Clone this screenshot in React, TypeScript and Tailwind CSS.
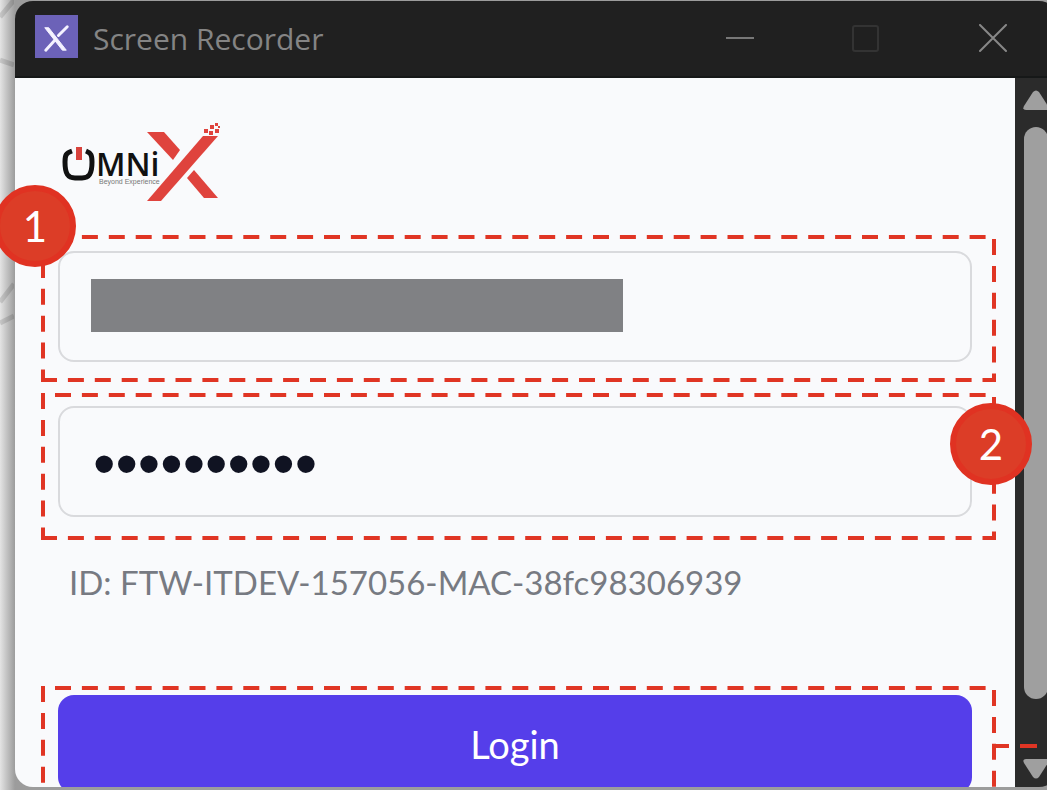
import React from 'react';

const BoxFrame = () => (
  <svg className="pointer-events-none absolute inset-0 h-full w-full" aria-hidden="true">
    <g stroke="#e03524" strokeWidth="4" strokeDasharray="16 10.9">
      <svg x="-2" y="2" width="100%" height="100%" overflow="visible">
        <line x1="16" y1="0" x2="100%" y2="0" />
      </svg>
      <line x1="2" y1="0" x2="2" y2="100%" />
      <svg x="-2" y="0" width="100%" height="100%" overflow="visible">
        <line x1="100%" y1="4" x2="100%" y2="100%" />
      </svg>
      <svg x="0" y="-2" width="100%" height="100%" overflow="visible">
        <line x1="0" y1="100%" x2="100%" y2="100%" />
      </svg>
    </g>
  </svg>
);

const Badge = ({ label, className }: { label: string; className: string }) => (
  <span
    className={`absolute flex h-[82px] w-[82px] items-center justify-center rounded-full border-[6px] border-[#e03222] bg-[#dc3d27] font-['Lato',sans-serif] text-[42px] leading-none text-white ${className}`}
  >
    {label}
  </span>
);

const AppIcon = () => (
  <svg className="mb-1 h-[43px] w-[43px]" viewBox="0 0 44 44" aria-hidden="true">
    <rect width="44" height="44" fill="#6c62b8" />
    <path d="M10 13L14 13L32 36L28 36Z" fill="#f4f2ff" stroke="#f4f2ff" strokeLinejoin="round" />
    <path d="M33 12L24 21M20 26L11 36" stroke="#f4f2ff" strokeWidth="3" strokeLinecap="round" />
  </svg>
);

const OmnixLogo = () => (
  <svg className="h-[82px] w-[164px]" viewBox="0 0 164 82" role="img" aria-label="Omnix Beyond Experience">
    <path
      d="M12 29C6 31 5 33 5 40C5 52 8 56 15 56H22C29 56 32 52 32 40C32 33 31 31 26 29"
      fill="none"
      stroke="#111"
      strokeWidth="5"
    />
    <rect x="16" y="25" width="6" height="13" fill="#d8423c" />
    <text x="36" y="54" fontSize="32" fontWeight="600" fill="#111" fontFamily="Open Sans, sans-serif">
      MNi
    </text>
    <text x="39" y="62" fontSize="7" fill="#777" fontFamily="Liberation Sans, sans-serif">
      Beyond Experience
    </text>
    <g fill="#df433d">
      <path d="M87 10H104L120 28L113 38Z" />
      <path d="M87 79L143 14H158L101 79Z" />
      <path d="M127 56L134 48L158 76H144Z" />
      <path d="M144 7h4v4h-4zM150 3h4v4h-4zM155 1h3v3h-3zM155 7h4v4h-4zM149 9h4v4h-4zM158 4h2v2h-2z" />
    </g>
  </svg>
);

const TitleBar = () => (
  <header className="flex h-[77px] shrink-0 items-center rounded-t-[18px] border-b-2 border-[#161818] bg-[#202020] pl-5 pr-[30px]">
    <AppIcon />
    <h1 className="ml-[15px] flex-1 font-['Open_Sans',sans-serif] text-[30px] leading-10 text-[#848484]">
      Screen Recorder
    </h1>
    <div className="flex gap-20 pr-3">
      <button type="button" aria-label="Minimize">
        <svg className="h-[30px] w-[46px]" viewBox="0 0 46 30" fill="none">
          <path d="M9 14H37" stroke="#777" strokeWidth="2" />
        </svg>
      </button>
      <button type="button" aria-label="Maximize" disabled>
        <svg className="h-[30px] w-[46px]" viewBox="0 0 46 30" fill="none">
          <rect x="10" y="2" width="25" height="25" rx="2" stroke="#333" strokeWidth="2" />
        </svg>
      </button>
      <button type="button" aria-label="Close">
        <svg className="h-[30px] w-[46px]" viewBox="0 0 46 30" fill="none">
          <path d="M11 1L37 27M37 1L11 27" stroke="#888" strokeWidth="2" strokeLinecap="round" />
        </svg>
      </button>
    </div>
  </header>
);

const ScrollBar = () => (
  <div className="flex w-[42px] shrink-0 flex-col items-center rounded-br-[18px] bg-[#2b2b2b] pt-3 pb-2" aria-hidden="true">
    <svg className="h-5 w-7" viewBox="0 0 28 20" fill="#9f9f9f">
      <path d="M11 2Q14 -1 17 2L26 16Q28 20 24 20H4Q0 20 2 16Z" />
    </svg>
    <div className="mt-[17px] mb-[60px] w-6 flex-1 rounded-full bg-[#9f9f9f]" />
    <svg className="h-5 w-7" viewBox="0 0 28 20" fill="#9f9f9f">
      <path d="M11 18Q14 21 17 18L26 4Q28 0 24 0H4Q0 0 2 4Z" />
    </svg>
  </div>
);

const LoginForm = () => (
  <form
    className="flex-1 overflow-hidden rounded-bl-[18px] bg-[#f9fafc] pl-[26px] pr-[19px] font-['Lato',sans-serif]"
    onSubmit={(e) => e.preventDefault()}
  >
    <div className="pt-[44px] pb-[31px] pl-[19px]">
      <OmnixLogo />
    </div>

    <div className="relative pt-4 pr-6 pb-5 pl-[17px]">
      <div className="relative">
        <input
          type="text"
          aria-label="Username"
          className="block h-[111px] w-full rounded-2xl border-2 border-[#d9dadd] bg-transparent px-8 text-[32px] outline-none"
        />
        <div className="absolute top-7 left-[33px] h-[53px] w-[532px] bg-[#808184]" />
      </div>
      <BoxFrame />
    </div>

    <div className="relative mt-[11px] pt-[13px] pr-6 pb-[23px] pl-[17px]">
      <input
        type="password"
        aria-label="Password"
        defaultValue="recorder10"
        className="block h-[111px] w-full rounded-2xl border-2 border-[#d9dadd] bg-transparent px-[33px] pt-1 font-['Liberation_Sans',sans-serif] text-[64px] text-[#101322] outline-none"
      />
      <BoxFrame />
    </div>

    <p className="mt-[22px] pl-[28px] text-[33px] leading-10 text-[#777a82]">ID: FTW-ITDEV-157056-MAC-38fc98306939</p>

    <div className="relative mt-[84px] pt-[9px] pr-6 pb-5 pl-[17px]">
      <button type="submit" className="block h-[98px] w-full rounded-2xl bg-[#553eea] text-[38px] text-white">
        Login
      </button>
      <BoxFrame />
    </div>
  </form>
);

const App = () => {
  return (
    <div className="relative flex h-screen overflow-hidden bg-linear-to-r from-[#e4e4e4] from-0% to-[#9c9c9c] to-[15px]">
      <svg className="absolute top-0 left-0 h-[330px] w-[14px]" fill="none" stroke="#000" strokeOpacity="0.12" strokeWidth="5" aria-hidden="true">
        <path d="M0 17L14 0M0 60L14 65M0 302L14 284M0 323L14 316" />
      </svg>
      <main className="relative mt-px mr-[-10px] mb-[3px] ml-[15px] flex min-w-0 flex-1 flex-col">
        <TitleBar />
        <div className="flex min-h-0 flex-1">
          <LoginForm />
          <ScrollBar />
        </div>
        <Badge label="1" className="top-[184px] left-[-21px]" />
        <Badge label="2" className="top-[402px] right-[25px]" />
        <svg className="absolute right-[19px] bottom-[39px] h-1 w-[46px]" aria-hidden="true">
          <line x1="0" y1="2" x2="46" y2="2" stroke="#e03524" strokeWidth="4" strokeDasharray="17 11" />
        </svg>
      </main>
    </div>
  );
};

export default App;
